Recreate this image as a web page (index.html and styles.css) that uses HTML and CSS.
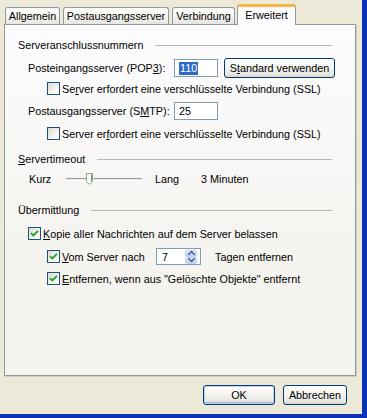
FILE: index.html
```html
<!DOCTYPE html>
<html lang="de">
<head>
	<meta charset="UTF-8">
	<title>Erweitert</title>
	<link rel="stylesheet" href="styles.css">
</head>
<body>
	<div class="window">
		<div class="tabs">
			<div class="tab tab-general">Allgemein</div>
			<div class="tab tab-out">Postausgangsserver</div>
			<div class="tab tab-conn">Verbindung</div>
			<div class="tab tab-adv active">Erweitert</div>
		</div>

		<div class="page">
			<div class="group-title"><span>Serveranschlussnummern</span><i></i></div>

			<div class="field row-pop">
				<span class="label">Posteingangsserver (POP<u>3</u>):</span>
				<span class="input"><span class="selected">110</span></span>
				<span class="button btn-std">S<u>t</u>andard verwenden</span>
			</div>
			<div class="check sub row-ssl1">
				<span class="box"></span>
				<span>Se<u>r</u>ver erfordert eine verschlüsselte Verbindung (SSL)</span>
			</div>

			<div class="field row-smtp">
				<span class="label">Postausgangsserver (S<u>M</u>TP):</span>
				<span class="input">25</span>
			</div>
			<div class="check sub row-ssl2">
				<span class="box"></span>
				<span>Server er<u>f</u>ordert eine verschlüsselte Verbindung (SSL)</span>
			</div>

			<div class="group-title row-timeout"><span><u>S</u>ervertimeout</span><i></i></div>

			<div class="slider-row">
				<span class="slider-label">Kurz</span>
				<span class="track">
					<svg class="thumb" width="7" height="12" viewBox="0 0 7 12">
						<path d="M0.5 0.5 H6.5 V8.5 L3.5 11.5 L0.5 8.5 Z" fill="#f7f7f4" stroke="#8aa88c"/>
						<path d="M1.5 1.5 V8" stroke="#ffffff"/>
						<path d="M5.5 1.5 V8.5" stroke="#6f9a73"/>
					</svg>
				</span>
				<span class="slider-max">Lang</span>
				<span>3 Minuten</span>
			</div>

			<div class="group-title row-deliver"><span>Übermittlung</span><i></i></div>

			<div class="check row-keep">
				<span class="box checked">
					<svg width="11" height="11" viewBox="0 0 11 11"><path d="M2 5.2 L4.3 7.5 L9 2.8" fill="none" stroke="#21a121" stroke-width="1.8"/></svg>
				</span>
				<span><u>K</u>opie aller Nachrichten auf dem Server belassen</span>
			</div>
			<div class="check sub row-days">
				<span class="box checked">
					<svg width="11" height="11" viewBox="0 0 11 11"><path d="M2 5.2 L4.3 7.5 L9 2.8" fill="none" stroke="#21a121" stroke-width="1.8"/></svg>
				</span>
				<span class="days-label"><u>V</u>om Server nach</span>
				<span class="spin">
					<span class="spin-value">7</span>
					<span class="spin-btns">
						<span class="spin-btn"><svg width="7" height="4" viewBox="0 0 7 4"><path d="M0 4 L3.5 0.5 L7 4" fill="none" stroke="#4d6185" stroke-width="1.5"/></svg></span>
						<span class="spin-btn"><svg width="7" height="4" viewBox="0 0 7 4"><path d="M0 0 L3.5 3.5 L7 0" fill="none" stroke="#4d6185" stroke-width="1.5"/></svg></span>
					</span>
				</span>
				<span class="days-after">Tagen entfernen</span>
			</div>
			<div class="check sub row-deleted">
				<span class="box checked">
					<svg width="11" height="11" viewBox="0 0 11 11"><path d="M2 5.2 L4.3 7.5 L9 2.8" fill="none" stroke="#21a121" stroke-width="1.8"/></svg>
				</span>
				<span><u>E</u>ntfernen, wenn aus "Gelöschte Objekte" entfernt</span>
			</div>
		</div>

		<div class="actions">
			<span class="button btn-ok">OK</span>
			<span class="button btn-cancel">Abbrechen</span>
		</div>
	</div>
</body>
</html>
```

FILE: styles.css
```css
*{
	margin: 0;
	padding: 0;
	box-sizing: border-box;
}
body{
	background: #ece9d8;
	font-family: "Liberation Sans", Arial, sans-serif;
	font-size: 10.8px;
	color: #000;
}
.window{
	width: 367px;
	height: 418px;
	background: #ece9d8;
	border-right: 5px solid #0b31b4;
	border-bottom: 4px solid #0b31b4;
	display: flex;
	flex-direction: column;
}

/* tabs */
.tabs{
	display: flex;
	align-items: flex-end;
	height: 24px;
	padding-left: 5px;
}
.tab{
	height: 17px;
	border: 1px solid #919b9c;
	border-bottom: none;
	border-radius: 3px 3px 0 0;
	background: linear-gradient(#ffffff, #f3f2ee 60%, #e6e5dd);
	display: flex;
	align-items: center;
	justify-content: center;
	margin-right: 3px;
}
.tab-general{ width: 55px; }
.tab-out{ width: 106px; }
.tab-conn{ width: 63px; margin-right: 2px; }
.tab-adv{ width: 59px; }
.tab.active{
	height: 21px;
	margin-bottom: -1px;
	background: #fcfcfe;
	border-top: 3px solid #f5b443;
	padding-bottom: 3px;
	position: relative;
	z-index: 1;
}

/* tab page */
.page{
	margin-left: 4px;
	width: 352px;
	height: 352px;
	border: 1px solid #919b9c;
	box-shadow: 1px 1px 0 #d0cdbf;
	background: linear-gradient(#fcfcfe, #f4f3ee 70%);
	padding: 13px 0 0 13px;
	display: flex;
	flex-direction: column;
}
.group-title{
	display: flex;
	align-items: center;
	height: 14px;
	width: 314px;
	gap: 12px;
}
.group-title i{
	flex: 1;
	height: 1px;
	background: #b9b8ac;
}
.row-timeout{ margin-top: 12px; }
.row-deliver{ margin-top: 17px; }

.field{
	display: flex;
	align-items: center;
	margin-left: 10px;
}
.label{
	width: 146px;
}
.input{
	width: 44px;
	height: 18px;
	border: 1px solid #7f9db9;
	background: #fff;
	padding-left: 4px;
	display: flex;
	align-items: center;
}
.selected{
	background: #316ac5;
	color: #fff;
	padding: 0 1px;
	line-height: 13px;
}
.row-pop{ margin-top: 6px; }
.row-smtp{ margin-top: 7px; }

.button{
	height: 20px;
	border: 1px solid #003c74;
	border-radius: 3px;
	background: linear-gradient(#ffffff, #f3f3ef 50%, #e5e4dc 90%, #d6d0c5);
	display: flex;
	align-items: center;
	justify-content: center;
}
.btn-std{
	width: 111px;
	margin-left: 6px;
}

/* checkboxes */
.check{
	display: flex;
	align-items: center;
	height: 13px;
	margin-left: 10px;
	gap: 2px;
}
.check.sub{ margin-left: 29px; }
.box{
	width: 13px;
	height: 13px;
	border: 1px solid #1c5180;
	background: linear-gradient(135deg, #dcdcd4, #f4f4f0 60%, #ffffff);
	display: flex;
	align-items: center;
	justify-content: center;
	flex: none;
}
.row-ssl1{ margin-top: 4px; }
.row-ssl2{ margin-top: 7px; }
.row-keep{ margin-top: 10px; }
.row-days{
	margin-top: 8px;
	height: 17px;
}
.row-deleted{ margin-top: 7px; }

.days-label{ width: 92px; }
.spin{
	width: 45px;
	height: 17px;
	border: 1px solid #7f9db9;
	background: #fff;
	display: flex;
	align-items: center;
	justify-content: space-between;
	padding: 1px 3px 1px 5px;
}
.spin-btns{
	display: flex;
	flex-direction: column;
	width: 12px;
	height: 14px;
}
.spin-btn{
	flex: 1;
	display: flex;
	align-items: center;
	justify-content: center;
	background: linear-gradient(#dfe9fd, #b9cdf6);
	border-radius: 2px;
	border: 1px solid #c6d5f6;
}
.days-after{ margin-left: 12px; }

/* slider */
.slider-row{
	display: flex;
	align-items: center;
	height: 14px;
	margin-top: 6px;
	margin-left: 11px;
}
.slider-label{ width: 37px; }
.track{
	width: 76px;
	height: 3px;
	border-top: 1px solid #9d9c99;
	border-bottom: 1px solid #fff;
	background: #e8e7e2;
	position: relative;
}
.thumb{
	position: absolute;
	left: 20px;
	top: -6px;
}
.slider-max{
	width: 46px;
	margin-left: 13px;
}

/* dialog buttons */
.actions{
	display: flex;
	justify-content: flex-end;
	gap: 8px;
	padding: 9px 15px 0 0;
}
.btn-ok{
	width: 72px;
	box-shadow: inset 0 0 0 1px #c2d4f5, inset 0 -1px 0 1px #98b8ea;
}
.btn-cancel{
	width: 64px;
}
```
